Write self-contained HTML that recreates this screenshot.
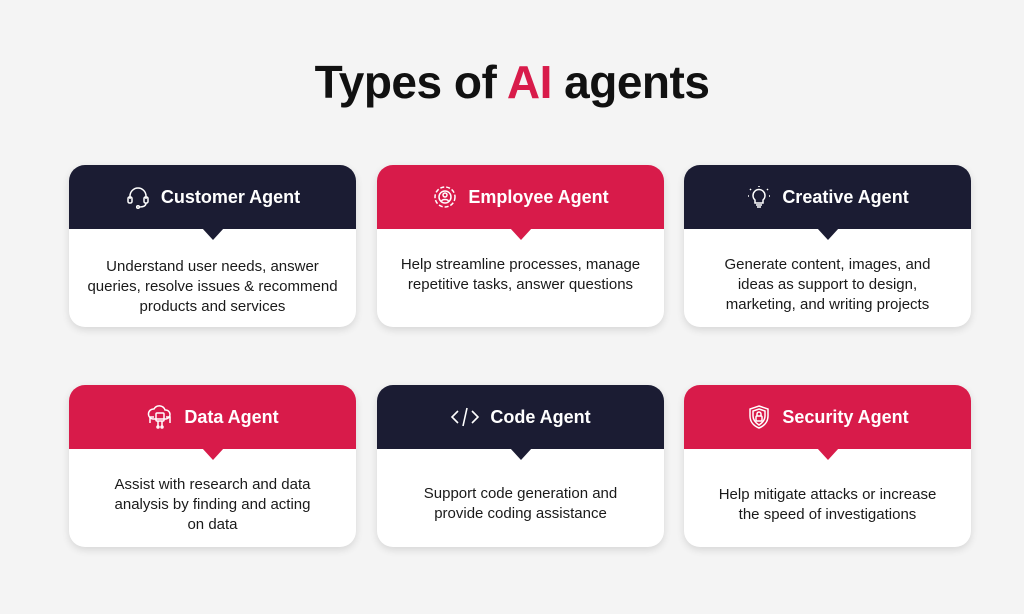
<!DOCTYPE html>
<html><head><style>
body{margin:0;width:1024px;height:614px;background:#f4f4f4;font-family:"Liberation Sans",sans-serif;position:relative;overflow:hidden}
h1{position:absolute;top:55px;left:0;width:1024px;text-align:center;margin:0;font-size:46px;font-weight:bold;color:#111;letter-spacing:-0.5px}
h1 span{color:#d81b4a}
.card{position:absolute;width:287px;height:162px;border-radius:16px;background:#fff;box-shadow:0 3px 8px rgba(0,0,0,.12);overflow:visible}
.hd{height:64px;border-radius:16px 16px 0 0;display:flex;align-items:center;justify-content:center;color:#fff;font-weight:bold;font-size:18px;position:relative}
.hd svg{margin-right:10px}
.hd:after{content:"";position:absolute;left:50%;bottom:-11px;margin-left:-11px;border-left:11px solid transparent;border-right:11px solid transparent;border-top:12px solid;border-top-color:inherit}
.n{background:#1b1c33;border-top-color:#1b1c33}
.r{background:#d81b4a;border-top-color:#d81b4a}
.bd{height:80px;margin-top:18px;display:flex;align-items:center;justify-content:center;text-align:center;font-size:15px;line-height:20px;color:#1a1a1a;white-space:nowrap}
</style></head><body>
<h1>Types of <span>AI</span> agents</h1>

<div class="card" style="left:69px;top:165px"><div class="hd n"><svg width="26" height="26" viewBox="0 0 26 26" fill="none" stroke="#fff" stroke-width="1.5"><path d="M5 15V12a8 8 0 0 1 16 0v3"/><rect x="3" y="13" width="4" height="6" rx="1.5"/><rect x="19" y="13" width="4" height="6" rx="1.5"/><path d="M21 19c0 3-3 4-7 4"/><circle cx="13" cy="23" r="1.3"/></svg>Customer Agent</div><div class="bd">Understand user needs, answer<br>queries, resolve issues &amp; recommend<br>products and services</div></div>

<div class="card" style="left:377px;top:165px"><div class="hd r"><svg width="26" height="26" viewBox="0 0 26 26" fill="none" stroke="#fff" stroke-width="1.5"><circle cx="13" cy="13" r="10" stroke-dasharray="4 2"/><circle cx="13" cy="13" r="6"/><circle cx="13" cy="11" r="2"/><path d="M9.5 17c1-2 6-2 7 0"/></svg>Employee Agent</div><div class="bd" style="margin-top:6px">Help streamline processes, manage<br>repetitive tasks, answer questions</div></div>

<div class="card" style="left:684px;top:165px"><div class="hd n"><svg width="26" height="26" viewBox="0 0 26 26" fill="none" stroke="#fff" stroke-width="1.5"><path d="M9 16a6 6 0 1 1 8 0v3H9z"/><path d="M10 21h6M11 23h4M13 2v1M4 5l1 1M22 5l-1 1M2 12h1M23 12h1"/></svg>Creative Agent</div><div class="bd" style="margin-top:16px">Generate content, images, and<br>ideas as support to design,<br>marketing, and writing projects</div></div>

<div class="card" style="left:69px;top:385px"><div class="hd r"><svg width="28" height="26" viewBox="0 0 28 26" fill="none" stroke="#fff" stroke-width="1.5"><path d="M7 15a5 5 0 0 1 1-10 6 6 0 0 1 11 1 4.5 4.5 0 0 1 1 9z"/><rect x="10" y="9" width="8" height="8" rx="1"/><path d="M12 17v5M16 17v5M8 13H4v6M20 13h4v6"/><circle cx="12" cy="23" r="1"/><circle cx="16" cy="23" r="1"/></svg>Data Agent</div><div class="bd" style="margin-top:16px">Assist with research and data<br>analysis by finding and acting<br>on data</div></div>

<div class="card" style="left:377px;top:385px"><div class="hd n"><svg width="30" height="26" viewBox="0 0 30 26" fill="none" stroke="#fff" stroke-width="1.6"><path d="M8 7l-6 6 6 6M22 7l6 6-6 6M17 4l-4 18"/></svg>Code Agent</div><div class="bd" style="margin-top:15px">Support code generation and<br>provide coding assistance</div></div>

<div class="card" style="left:684px;top:385px"><div class="hd r"><svg width="26" height="26" viewBox="0 0 26 26" fill="none" stroke="#fff" stroke-width="1.5"><path d="M13 2l9 3v7c0 6-4 10-9 12-5-2-9-6-9-12V5z"/><path d="M13 5l6 2v5c0 4-3 7-6 9-3-2-6-5-6-9V7z"/><rect x="10" y="12" width="6" height="5" rx="1"/><path d="M11 12v-2a2 2 0 0 1 4 0v2"/></svg>Security Agent</div><div class="bd" style="margin-top:16px">Help mitigate attacks or increase<br>the speed of investigations</div></div>
</body></html>
